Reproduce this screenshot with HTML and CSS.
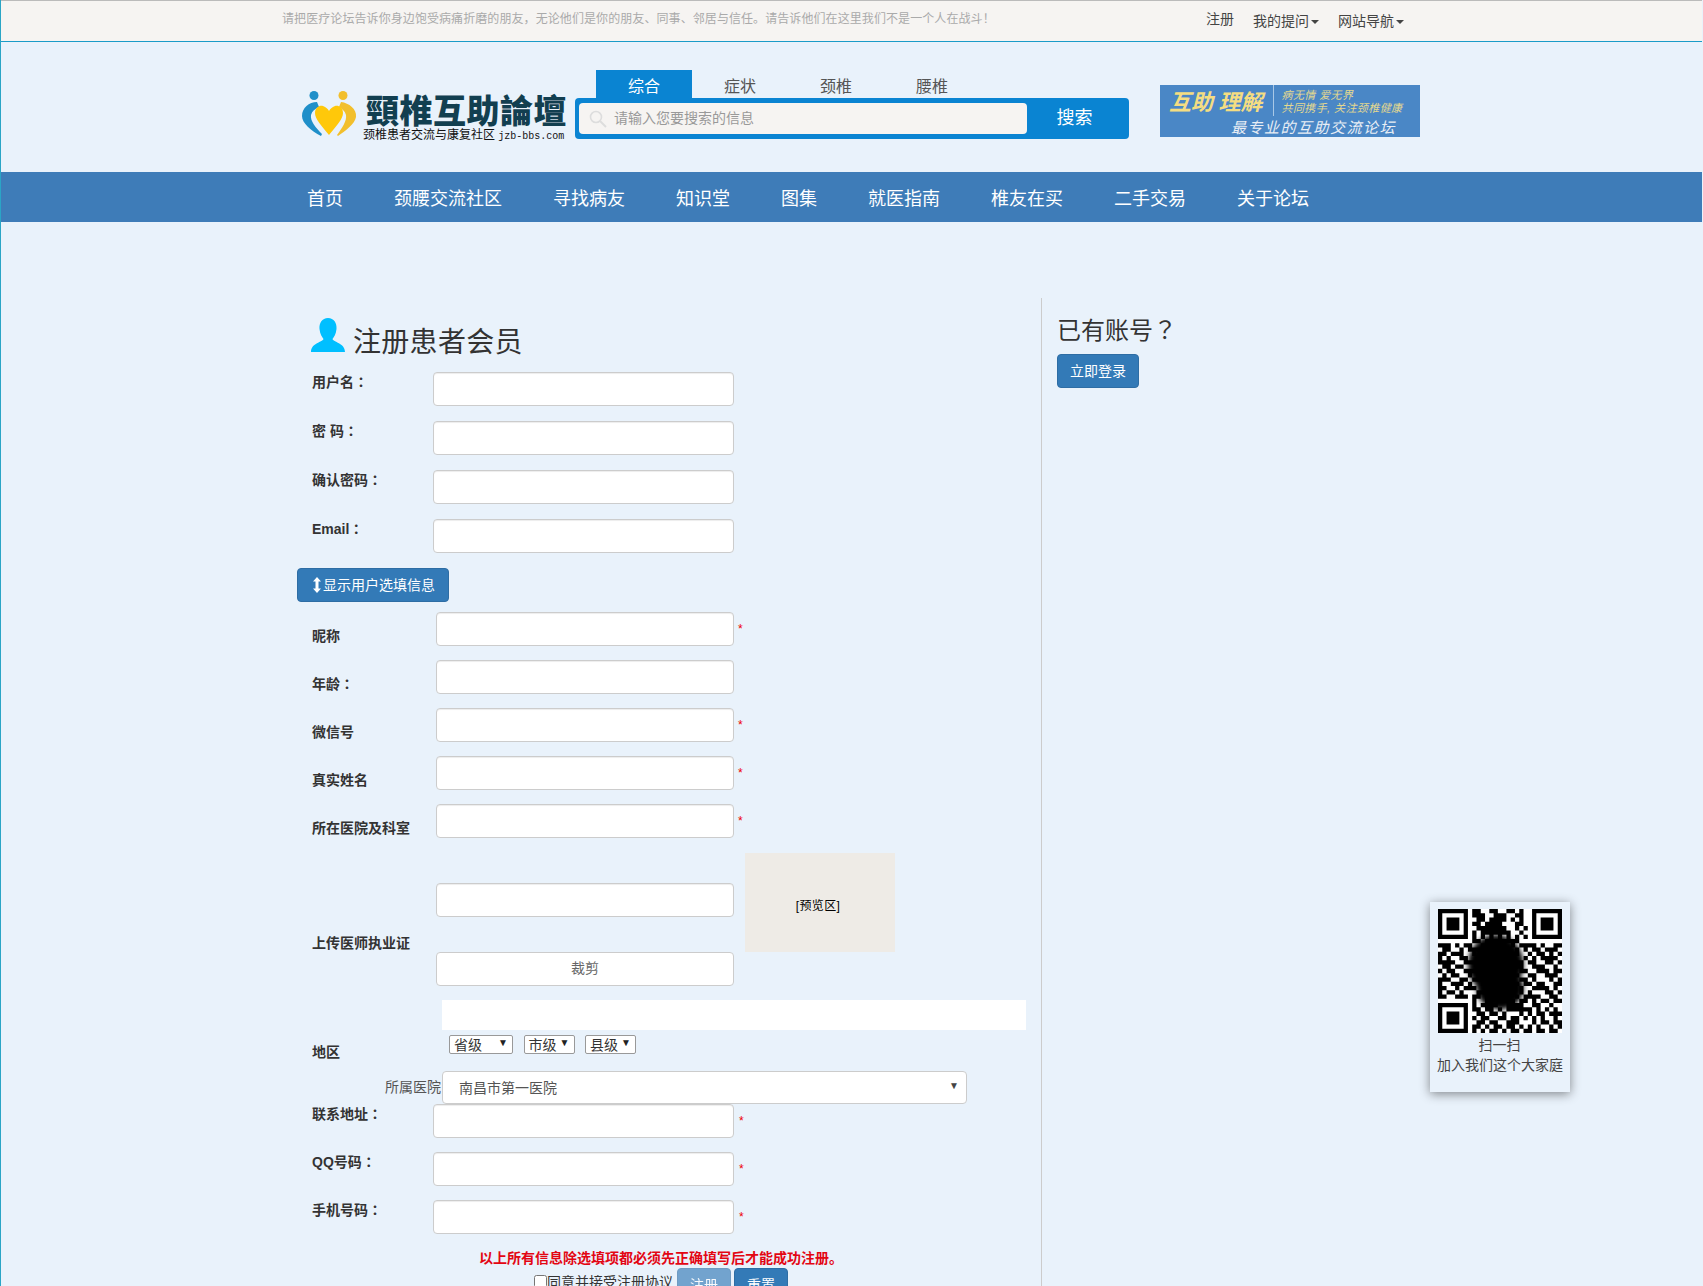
FILE: index.html
```html
<!DOCTYPE HTML>
<html>
    <head>
        <meta charset="UTF-8">
        <title>颈椎互助论坛 - 注册</title>
        <link rel="stylesheet" href="styles.css">
    </head>
    <body>
        <div class="page">
            <div class="topbar">
                <span class="notice">请把医疗论坛告诉你身边饱受病痛折磨的朋友，无论他们是你的朋友、同事、邻居与信任。请告诉他们在这里我们不是一个人在战斗！</span>
                <a class="toplink reg">注册</a>
                <a class="toplink">我的提问<i class="caret"></i></a>
                <a class="toplink">网站导航<i class="caret"></i></a>
            </div>

            <header class="head">
                <div class="logo">
                    <svg class="logo-pic" viewBox="0 0 56 46" width="56" height="46">
                        <circle cx="13" cy="4.5" r="4.5" fill="#1f8fc9"/>
                        <circle cx="42" cy="4.5" r="4.5" fill="#f2bf2c"/>
                        <path fill="#1f8fc9" d="M16 11C8 11 1 17 1 25C1 32 10 40 20 45L21 43C15 37 9 30 10 24C11 20 14 18 18 16Z"/>
                        <path fill="#f2bf2c" d="M40 11C48 12 56 18 55 26C54 33 44 40 37 45L36 44C41 37 46 30 45 24C44 20 41 18 38 16Z"/>
                        <path fill="#ffc80a" d="M28 44C20 34 14 28 14 22C14 16 19 14 22 15C25 16 27 18 28 20C29 18 31 16 34 15C37 14 42 16 42 22C42 28 36 34 28 44Z"/>
                    </svg>
                    <div class="logo-text">
                        <div class="logo-name">頸椎互助論壇</div>
                        <div class="logo-sub">颈椎患者交流与康复社区 <span class="logo-url">jzb-bbs.com</span></div>
                    </div>
                </div>
                <div class="search">
                    <div class="tabs">
                        <a class="tab on">综合</a>
                        <a class="tab">症状</a>
                        <a class="tab">颈椎</a>
                        <a class="tab">腰椎</a>
                    </div>
                    <div class="search-box">
                        <div class="search-input">
                            <svg viewBox="0 0 18 18" width="18" height="18" fill="none" stroke="#ddd">
                                <circle cx="7" cy="7" r="5.5" stroke-width="1.6"/>
                                <path d="M11 11l6 6" stroke-width="2"/>
                            </svg>
                            <span>请输入您要搜索的信息</span>
                        </div>
                        <a class="search-btn">搜索</a>
                    </div>
                </div>
                <div class="banner">
                    <div class="banner-top">
                        <span class="banner-big">互助 理解</span>
                        <span class="banner-small">病无情 爱无界<br>共同携手, 关注颈椎健康</span>
                    </div>
                    <div class="banner-line">最专业的互助交流论坛</div>
                </div>
            </header>

            <nav class="nav">
                <a>首页</a>
                <a>颈腰交流社区</a>
                <a>寻找病友</a>
                <a>知识堂</a>
                <a>图集</a>
                <a>就医指南</a>
                <a>椎友在买</a>
                <a>二手交易</a>
                <a>关于论坛</a>
            </nav>

            <div class="main">
                <form class="reg-form">
                    <h2 class="title">
                        <svg viewBox="0 0 34 34" width="34" height="34" fill="#00bfff">
                            <path d="M17 0C23 0 26 5 25.500 11C25 16 23 19 21.500 21C22 24 34 25 34 34H0C0 25 12 24 12.500 21C11 19 9 16 8.500 11C8 5 11 0 17 0Z"/>
                        </svg>
                        <span>注册患者会员</span>
                    </h2>

                    <div class="row"><label>用户名<span class="punct">：</span></label><input class="field"></div>
                    <div class="row"><label>密 码<span class="punct">：</span></label><input class="field"></div>
                    <div class="row"><label>确认密码<span class="punct">：</span></label><input class="field"></div>
                    <div class="row"><label>Email<span class="punct">：</span></label><input class="field"></div>

                    <a class="btn toggle">
                        <svg viewBox="0 0 8 16" width="8" height="16" fill="#fff"><path d="M4 0L8 4.500H5.500V11.500H8L4 16L0 11.500H2.500V4.500H0Z"/></svg>显示用户选填信息
                    </a>

                    <div class="row opt"><label>昵称</label><input class="field"><b class="star">*</b></div>
                    <div class="row opt"><label>年龄<span class="punct">：</span></label><input class="field"></div>
                    <div class="row opt"><label>微信号</label><input class="field"><b class="star">*</b></div>
                    <div class="row opt"><label>真实姓名</label><input class="field"><b class="star">*</b></div>
                    <div class="row opt"><label>所在医院及科室</label><input class="field"><b class="star">*</b></div>

                    <div class="upload">
                        <label>上传医师执业证</label>
                        <div class="upload-col">
                            <input class="field">
                            <a class="crop">裁剪</a>
                        </div>
                        <div class="preview">[预览区]</div>
                    </div>

                    <div class="area">
                        <label>地区</label>
                        <div class="area-col">
                            <div class="strip"></div>
                            <div class="selects">
                                <span class="mini w63">省级<i>▼</i></span>
                                <span class="mini w51">市级<i>▼</i></span>
                                <span class="mini w50">县级<i>▼</i></span>
                            </div>
                        </div>
                    </div>

                    <div class="hospital">
                        <span>所属医院</span>
                        <div class="hospital-sel">南昌市第一医院<i>▼</i></div>
                    </div>

                    <div class="row tight"><label>联系地址<span class="punct">：</span></label><input class="field"><b class="star">*</b></div>
                    <div class="row tight"><label>QQ号码<span class="punct">：</span></label><input class="field"><b class="star">*</b></div>
                    <div class="row tight"><label>手机号码<span class="punct">：</span></label><input class="field"><b class="star">*</b></div>

                    <p class="warn">以上所有信息除选填项都必须先正确填写后才能成功注册。</p>
                    <div class="submit">
                        <input type="checkbox" class="agree"><span>同意并接受注册协议</span>
                        <a class="btn off">注册</a>
                        <a class="btn">重置</a>
                    </div>
                </form>

                <aside class="side">
                    <h3>已有账号<span class="punct">？</span></h3>
                    <a class="btn login">立即登录</a>
                </aside>
            </div>

            <div class="qr">
                <svg id="qrcode" viewBox="0 0 29 29" width="124" height="124">
                    <defs><filter id="soft"><feGaussianBlur stdDeviation="0.6"/></filter></defs>
                    <rect width="29" height="29" fill="#fff"/>
                    <path id="qrcells" stroke="#000" stroke-width="1" fill="none"/>
                    <g filter="url(#soft)">
                        <ellipse cx="13.500" cy="13" rx="6.500" ry="7"/>
                        <ellipse cx="14.500" cy="18.500" rx="5.500" ry="5"/>
                    </g>
                </svg>
                <p>扫一扫</p>
                <p>加入我们这个大家庭</p>
            </div>
        </div>
        <script src="qr.js"></script>
    </body>
</html>
```

FILE: styles.css
```css
* {box-sizing: border-box;}
html, body {margin: 0; padding: 0;}
body {
    font-family: "Liberation Sans", "Noto Sans CJK SC", sans-serif;
    font-size: 14px;
    color: #333;
    background: #e9f2fb;
}
.page {
    position: relative;
    height: 1286px;
    overflow: hidden;
    border-left: 1px solid #2aa5c6;
    border-right: 1px solid #e9f2fb;
}
/* the TC face centres full width punctuation */
.punct {font-family: "Noto Sans CJK TC", sans-serif; line-height: 0;}

/* top bar */
.topbar {
    display: flex;
    height: 42px;
    padding-left: 281px;
    background: #f6f4f2;
    border-top: 1px solid #bbb;
    border-bottom: 1px solid #1a9cc8;
}
.notice {width: 924px; padding-top: 8px; font-size: 12px; letter-spacing: .08px; color: #aaa; white-space: nowrap;}
.toplink {padding-top: 10px; margin-right: 19px; color: #444; line-height: 20px;}
.toplink.reg {padding-top: 8px;}
.caret {
    display: inline-block;
    margin-left: 2px;
    vertical-align: middle;
    border-top: 4px solid #444;
    border-left: 4px solid transparent;
    border-right: 4px solid transparent;
}

/* header */
.head {display: flex; height: 130px; padding-left: 300px;}
.logo {display: flex; width: 274px; padding-top: 48px;}
.logo-pic {flex: none; margin-top: 1px;}
.logo-text {margin-left: 6px;}
.logo-name {
    font-family: "Noto Sans CJK TC", sans-serif;
    font-weight: 900;
    font-size: 33px;
    line-height: 38px;
    letter-spacing: .5px;
    color: #123f50;
    margin-left: 3px;
    white-space: nowrap;
}
.logo-sub {font-size: 12px; line-height: 14px; color: #111; white-space: nowrap;}
.logo-url {font-family: "Liberation Mono", monospace; font-size: 10px;}
.search {width: 554px; padding-top: 28px;}
.tabs {display: flex; margin-left: 21px;}
.tab {
    width: 96px;
    height: 28px;
    line-height: 34px;
    text-align: center;
    font-size: 16px;
    color: #555;
}
.tab.on {background: #0a84d2; color: #fff;}
.search-box {
    display: flex;
    height: 41px;
    background: #0a84d2;
    border-radius: 4px;
    padding: 5px 0 5px 4px;
}
.search-input {
    display: flex;
    align-items: center;
    width: 448px;
    padding-left: 10px;
    background: #f6f4f2;
    border-radius: 4px;
    color: #999;
}
.search-input span {margin: 0 0 3px 7px;}
.search-btn {
    flex: 1;
    padding-right: 7px;
    line-height: 30px;
    text-align: center;
    font-size: 18px;
    color: #fff;
}
.banner {
    width: 260px;
    height: 52px;
    margin-left: 31px;
    margin-top: 43px;
    padding: 0 0 0 9px;
    background: #4a87c6;
    overflow: hidden;
}
.banner-top {display: flex; align-items: center; height: 29px;}
.banner-big {
    font-family: "Liberation Serif", "Noto Sans CJK SC", serif;
    font-weight: bold;
    font-style: italic;
    font-size: 22px;
    color: #f4dd82;
    white-space: nowrap;
    padding-right: 10px;
    border-right: 1px solid #a9c8e6;
}
.banner-small {
    margin: 4px 0 0 8px;
    font-size: 11px;
    line-height: 13px;
    font-style: italic;
    letter-spacing: .4px;
    color: #e3d88f;
    white-space: nowrap;
}
.banner-line {
    margin: 5px 0 0 62px;
    font-size: 15px;
    line-height: 18px;
    font-style: italic;
    letter-spacing: 1.5px;
    color: #e8eef5;
    white-space: nowrap;
}

/* nav */
.nav {
    display: flex;
    height: 50px;
    padding: 2px 0 0 281px;
    background: #3e7cb8;
}
.nav a {padding: 0 25.500px; line-height: 51px; font-size: 18px; color: #fff;}
.nav a:first-child {padding-left: 25px;}

/* main */
.main {display: flex; margin-top: 76px; padding-left: 296px;}
.reg-form {width: 744px; flex: none;}
.title {
    display: flex;
    align-items: flex-start;
    height: 54px;
    margin: 0 0 20px 14px;
    font-size: 28px;
    font-weight: normal;
    line-height: 34px;
    letter-spacing: .3px;
}
.title svg {margin: 20px 8px 0 0;}
.title span {margin-top: 28px;}
.row {display: flex; height: 34px; margin-bottom: 15px; padding-left: 15px;}
.row label {width: 121px; font-weight: bold; line-height: 20px;}
.field {
    display: block;
    width: 301px;
    height: 34px;
    padding: 6px 12px;
    background: #fff;
    border: 1px solid #ccc;
    border-radius: 4px;
    box-shadow: inset 0 1px 1px rgba(0,0,0,.075);
}
.star {margin: 10px 0 0 5px; font-size: 12px; font-weight: normal; color: #e00;}

.btn {
    display: inline-block;
    height: 34px;
    padding: 0 12px;
    line-height: 32px;
    color: #fff;
    background: #337ab7;
    border: 1px solid #2e6da4;
    border-radius: 4px;
}
.toggle {display: flex; align-items: center; width: 152px; margin-bottom: 10px; padding-left: 15px; white-space: nowrap;}
.toggle svg {margin-right: 2px;}

.row.opt {margin-bottom: 14px;}
.row.opt label {width: 124px; padding-top: 14px;}
.row.opt .field {width: 298px;}
.row.opt .star {margin-left: 4px;}

.upload {display: flex; height: 132px; margin-top: 15px; padding-left: 15px;}
.upload label {width: 124px; padding-top: 80px; font-weight: bold; line-height: 20px;}
.upload-col {width: 298px; padding-top: 30px;}
.upload-col .field {width: 100%;}
.crop {
    display: block;
    height: 34px;
    margin-top: 35px;
    line-height: 30px;
    text-align: center;
    color: #666;
    background: #fff;
    border: 1px solid #ccc;
    border-radius: 4px;
}
.preview {
    width: 150px;
    height: 99px;
    margin-left: 11px;
    padding: 43px 4px 0 0;
    text-align: center;
    font-size: 12px;
    letter-spacing: .4px;
    color: #000;
    background: #eeebe6;
}

.area {display: flex; margin-top: 15px; padding-left: 15px; height: 71px;}
.area label {width: 130px; padding-top: 42px; font-weight: bold; line-height: 20px;}
.strip {width: 584px; height: 30px; background: #fff;}
.selects {display: flex; gap: 10.500px; padding: 5px 0 0 7px;}
.mini {
    display: flex;
    justify-content: space-between;
    height: 19px;
    padding: 0 4px;
    line-height: 19px;
    font-size: 14px;
    color: #333;
    background: #fff;
    border: 1px solid #999;
    border-radius: 2px;
}
.mini i {font-size: 10px; font-style: normal; line-height: 14px; color: #222;}
.w63 {width: 64px;}
.w51 {width: 51px;}
.w50 {width: 51px;}

.hospital {display: flex; height: 33px; padding-left: 88px;}
.hospital span {width: 57px; line-height: 32px; color: #555; white-space: nowrap;}
.hospital-sel {
    display: flex;
    justify-content: space-between;
    width: 525px;
    padding: 0 7px 0 16px;
    line-height: 33px;
    color: #555;
    background: #fff;
    border: 1px solid #ccc;
    border-radius: 4px;
}
.hospital-sel i {font-size: 10px; font-style: normal; line-height: 28px; color: #444;}

.row.tight {margin-bottom: 14px;}
.warn {
    margin: 0 0 0 182px;
    font-size: 14px;
    font-weight: bold;
    line-height: 20px;
    color: #e30613;
    white-space: nowrap;
}
.submit {display: flex; align-items: flex-start; margin-top: 0; padding-left: 237px;}
.agree {width: 13px; height: 13px; margin: 7px 0 0 0;}
.submit span {line-height: 28px; margin-right: 4px; white-space: nowrap;}
.submit .btn {width: 54px; margin-right: 3px; text-align: center; padding: 0;}
.submit .off {opacity: .65;}

/* right column */
.side {flex: 1; padding-left: 15px; border-left: 1px solid #ccc; height: 990px;}
.side h3 {margin: 20px 0 10px; font-size: 24px; font-weight: normal; line-height: 26px;}

/* floating qr box */
.qr {
    position: absolute;
    left: 1429px;
    top: 902px;
    width: 140px;
    height: 190px;
    padding: 7px 8px 0;
    text-align: center;
    color: #444;
    background: #e9f2fb;
    box-shadow: 0 2px 10px rgba(0,0,0,.45);
}
.qr svg {display: block;}
.qr p {margin: 0 0 0 -1px; line-height: 20px; white-space: nowrap; position: relative; top: 2px;}
```

FILE: qr.js
```js
// qr modules, one string per row
var rows = [
"11111110110011001101001111111",
"10000010111001110011001000001",
"10111010011011110101001011101",
"10111010110111100011001011101",
"10111010011111110010101011101",
"10000010101111111001001000001",
"11111110101010101010101111111",
"00000000110111111110000000000",
"11101011001100110101111010011",
"01100101110010011010101101110",
"11011100100101100110010110101",
"10100110011011001100101011110",
"11110011101100110011011001101",
"01101100010011001011001110010",
"10110011100110110101100111011",
"01011001011001101010011001110",
"11100110110011010101101000101",
"10011101001101100110110110011",
"11001011100110011001001111010",
"10110100011001101101010001101",
"11001110110100110010111100110",
"00000000100110011101101011011",
"11111110101111001111001100100",
"10000010110110101111110101010",
"10111010011011010001010110111",
"10111010101100110110101010010",
"10111010011011001110001011011",
"10000010110101101101010100101",
"11111110101011010110110110110"
];

var d = "";
rows.forEach(function(row, y){
    for(var x = 0; x < row.length; x++){
        if(row[x] == "1"){
            var run = x;
            while(row[run] == "1") run++;
            d += "M" + x + " " + (y + .5) + "h" + (run - x);
            x = run;
        }
    }
});
document.getElementById("qrcells").setAttribute("d", d);
```
